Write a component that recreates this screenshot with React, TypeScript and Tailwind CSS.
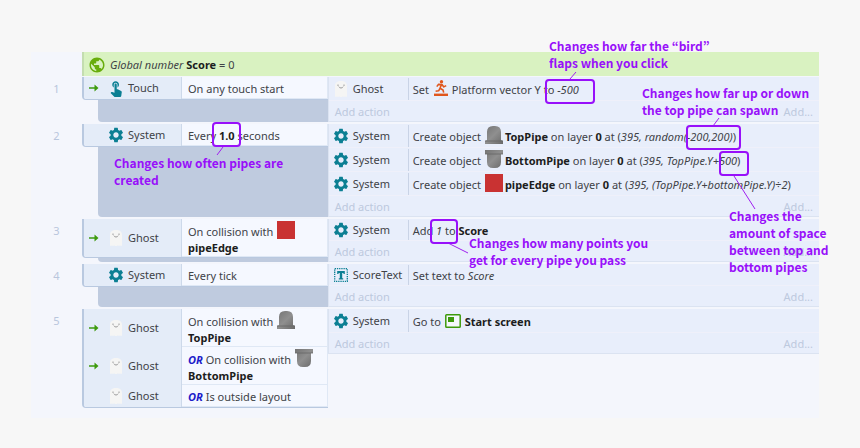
import type { ReactNode } from 'react'
import { MdPublic, MdSettings, MdTouchApp } from 'react-icons/md'

type ObjectName = 'Touch' | 'System' | 'Ghost' | 'ScoreText'
type Condition = { object: ObjectName; trigger?: boolean; text: ReactNode }
type Action = { object: ObjectName; tall?: boolean; text: ReactNode }
type EventBlock = { id: number; conditions: Condition[]; actions: Action[] }

function GhostIcon() {
  return (
    <svg viewBox="0 0 14 18" className="h-[18px] w-3.5" aria-hidden="true">
      <path
        d="M1 6C1 2.8 3.2 1 7 1s6 1.8 6 5v10.2c0 .9-1.6 1.1-2 0-.4 1.100-1.700 1.100-2 0-.4 1.100-3.600 1.100-4 0-.4 1.100-1.600 1.100-2 0-.4 1.100-2 .9-2 0z"
        fill="#f5f5f4"
      />
      <path d="M4 4.500v1.500M10 4.500v1.500M4.800 6.600c.8 1.900 3.600 1.900 4.400 0" fill="none" stroke="#9c9c9c" strokeWidth="1" />
    </svg>
  )
}

function TextIcon() {
  return (
    <svg viewBox="0 0 14 14" className="h-3.5 w-3.5" aria-hidden="true">
      <rect x="0.700" y="0.700" width="12.600" height="12.600" fill="none" stroke="#0b7f93" strokeWidth="1.300" strokeDasharray="1.300 0.900" />
      <path d="M3.200 3h7.600v3H9.600l-.3-1H8.200v5.300h1v1.200H4.800v-1.200h1V5H4.700l-.3 1H3.200z" fill="#0b7f93" />
    </svg>
  )
}

function ObjectIcon({ name }: { name: ObjectName }) {
  if (name === 'Ghost') return <GhostIcon />
  if (name === 'ScoreText') return <TextIcon />
  if (name === 'Touch') return <MdTouchApp className="h-[18px] w-[18px] text-[#0b7f93]" />
  return <MdSettings className="h-[18px] w-[18px] text-[#0b7f93]" />
}

function PipeIcon({ flipped = false }: { flipped?: boolean }) {
  return (
    <svg viewBox="0 0 18 18" className="mr-0.5 ml-px inline-block h-[18px] w-[18px] align-[-3px]" aria-hidden="true">
      <defs>
        <linearGradient id="pipe" x1="0" y1="0" x2="1" y2="1">
          <stop offset="0" stopColor="#747474" />
          <stop offset="0.5" stopColor="#8f8f8f" />
          <stop offset="1" stopColor="#696969" />
        </linearGradient>
      </defs>
      <path
        d={
          flipped
            ? 'M0 0h18v4h-2v8q0 6-6 6H8q-6 0-6-6V4H0z'
            : 'M0 18h18v-3l-2-1V6q0-6-6-6H8Q2 0 2 6v8l-2 1z'
        }
        fill="url(#pipe)"
      />
      <path d={flipped ? 'M0 4h18' : 'M0 15h18'} stroke="#666" strokeWidth="0.800" />
    </svg>
  )
}

function EdgeIcon() {
  return <span className="mr-0.5 ml-px inline-block h-[18px] w-[18px] bg-[#c93232] align-[-3px]" />
}

function PlatformIcon() {
  return (
    <svg viewBox="0 0 14 16" className="mr-1 ml-0.5 inline-block h-4 w-3.5 align-[-2px]" aria-hidden="true">
      <circle cx="7.500" cy="1.800" r="1.700" fill="#e0561d" />
      <path
        d="M2.800 6.600L4.400 4.400 8 4.600l1.800 2.300 2.400-1.300M7.400 4.800L6 8.300l3 1.700.7 2.600M6 8.300l-1.400 2.500-3 .4"
        fill="none"
        stroke="#e0561d"
        strokeWidth="1.600"
        strokeLinejoin="round"
      />
      <path d="M0 13.600h14V16H0z" fill="#e0561d" />
    </svg>
  )
}

function LayoutIcon() {
  return (
    <svg viewBox="0 0 16 14" className="mr-1 ml-px inline-block h-3.5 w-4 align-[-2px]" aria-hidden="true">
      <rect x="0.800" y="0.800" width="14.400" height="12.400" rx="0.800" fill="#f5f8fd" stroke="#3d9a0c" strokeWidth="1.500" />
      <rect x="3" y="3" width="6" height="5" fill="#3d9a0c" />
    </svg>
  )
}

function TriggerArrow() {
  return (
    <svg viewBox="0 0 10 8" className="h-2 w-2.5" aria-hidden="true">
      <path d="M0 3.200h5.500V.5L9.500 4l-4 3.500V4.800H0z" fill="#3d9a0c" />
    </svg>
  )
}

const Or = () => <strong className="font-bold text-[#1c1cc9] italic">OR</strong>

const EVENTS: EventBlock[] = [
  {
    id: 1,
    conditions: [{ object: 'Touch', trigger: true, text: 'On any touch start' }],
    actions: [
      {
        object: 'Ghost',
        tall: true,
        text: <>Set <PlatformIcon />Platform vector Y to <i>-500</i></>,
      },
    ],
  },
  {
    id: 2,
    conditions: [{ object: 'System', text: <>Every <b>1.0</b> seconds</> }],
    actions: [
      {
        object: 'System',
        tall: true,
        text: <>Create object <PipeIcon /><b>TopPipe</b> on layer <b>0</b> at (<i>395, random(-200,200)</i>)</>,
      },
      {
        object: 'System',
        tall: true,
        text: <>Create object <PipeIcon flipped /><b>BottomPipe</b> on layer <b>0</b> at (<i>395, TopPipe.Y+500</i>)</>,
      },
      {
        object: 'System',
        tall: true,
        text: <>Create object <EdgeIcon /><b>pipeEdge</b> on layer <b>0</b> at (<i>395, (TopPipe.Y+bottomPipe.Y)÷2</i>)</>,
      },
    ],
  },
  {
    id: 3,
    conditions: [
      { object: 'Ghost', trigger: true, text: <>On collision with <EdgeIcon /> <b>pipeEdge</b></> },
    ],
    actions: [{ object: 'System', text: <>Add <i>1</i> to <b>Score</b></> }],
  },
  {
    id: 4,
    conditions: [{ object: 'System', text: 'Every tick' }],
    actions: [{ object: 'ScoreText', text: <>Set text to <i>Score</i></> }],
  },
  {
    id: 5,
    conditions: [
      { object: 'Ghost', trigger: true, text: <>On collision with <PipeIcon /> <b>TopPipe</b></> },
      { object: 'Ghost', trigger: true, text: <><Or /> On collision with <PipeIcon flipped /> <b>BottomPipe</b></> },
      { object: 'Ghost', text: <><Or /> Is outside layout</> },
    ],
    actions: [{ object: 'System', tall: true, text: <>Go to <LayoutIcon /><b>Start screen</b></> }],
  },
]

function ConditionRow({ condition }: { condition: Condition }) {
  return (
    <div className="flex min-h-[22px]">
      <div className="flex w-[98px] shrink-0 items-center border-r border-[#cdd9ea] bg-[#e4ecf8]">
        <span className="flex w-5 shrink-0 justify-center">{condition.trigger && <TriggerArrow />}</span>
        <span className="flex w-6 shrink-0 justify-center">
          <ObjectIcon name={condition.object} />
        </span>
        {condition.object}
      </div>
      <div className="flex flex-1 items-center border-r border-b border-[#dfe8f5] bg-[#f5f8ff] pl-1.5">
        <p className="max-w-[132px] pt-0.5 leading-4">{condition.text}</p>
      </div>
    </div>
  )
}

function ActionRow({ action }: { action: Action }) {
  return (
    <div
      className={`flex items-stretch border-b border-[#eff0fa] pt-px whitespace-nowrap ${action.tall ? 'h-6' : 'h-[22px]'}`}
    >
      <div className="flex w-20 shrink-0 items-center border-r border-[#c9d3e6]">
        <span className="flex w-6 shrink-0 justify-center">
          <ObjectIcon name={action.object} />
        </span>
        {action.object}
      </div>
      <div className="flex items-center pt-px pl-1">
        <p className="leading-5">{action.text}</p>
      </div>
    </div>
  )
}

function EventRow({ event }: { event: EventBlock }) {
  return (
    <section className="flex">
      <span className="w-[51px] shrink-0 pt-1 text-center text-[#b9c6dd]">{event.id}</span>
      <div className="flex flex-1 items-stretch">
        <div className="flex w-1/3 shrink-0 flex-col">
          <div className="overflow-hidden rounded-bl-sm border-b border-l-2 border-[#b9c9e0]">
            {event.conditions.map((c, i) => (
              <ConditionRow key={i} condition={c} />
            ))}
          </div>
          <div className="ml-4 flex-1 rounded-bl-sm bg-[#bfcbdf]" />
        </div>
        <div className="flex-1 self-start border-b border-l border-[#dbe3f1] bg-[#e8eefb]">
          {event.actions.map((a, i) => (
            <ActionRow key={i} action={a} />
          ))}
          <div className="flex h-5 items-center justify-between px-1.5 pt-px text-[#bdc9de]">
            <button type="button">Add action</button>
            <button type="button">Add...</button>
          </div>
        </div>
      </div>
    </section>
  )
}

// Highlight frames drawn over the edited values
const FRAMES = [
  'left-[545px] top-[79px] w-[50px] h-[25px]',
  'left-[212px] top-[122px] w-[29px] h-[25px]',
  'left-[686px] top-[125px] w-[55px] h-[25px]',
  'left-[719px] top-[151px] w-[30px] h-[25px]',
  'left-[430px] top-[219px] w-[28px] h-[25px]',
]

const NOTES = [
  { place: 'left-[549px] top-[37px]', lines: ['Changes how far the “bird”', 'flaps when you click'] },
  { place: 'left-[642px] top-[84px]', lines: ['Changes how far up or down', 'the top pipe can spawn'] },
  { place: 'left-[114px] top-[154px]', lines: ['Changes how often pipes are', 'created'] },
  { place: 'left-[469px] top-[234px]', lines: ['Changes how many points you', 'get for every pipe you pass'] },
  { place: 'left-[729px] top-[207px]', lines: ['Changes the', 'amount of space', 'between top and', 'bottom pipes'] },
]

function Annotations() {
  return (
    <div className="pointer-events-none absolute inset-0">
      <svg className="absolute inset-0 h-full w-full" stroke="#a020f0" strokeWidth="1" aria-hidden="true">
        <path d="M576 72l-6 7M719 118l-6 8M223 147l-6 8M734 176l21 33M448 243l20 10" fill="none" />
      </svg>
      {FRAMES.map((frame) => (
        <span key={frame} className={`absolute rounded border-2 border-[#9810fa] ${frame}`} />
      ))}
      {NOTES.map((note) => (
        <p
          key={note.place}
          className={`absolute font-['Noto_Sans_CJK_KR',sans-serif] text-xs leading-[17px] font-bold whitespace-nowrap text-[#9810fa] ${note.place}`}
        >
          {note.lines.map((line) => (
            <span key={line} className="block">
              {line}
            </span>
          ))}
        </p>
      ))}
    </div>
  )
}

export default function App() {
  return (
    <main className="relative min-h-screen bg-[#f7f7f7] pt-[52px] pr-[41px] pb-7 pl-[31px] font-['Noto_Sans',sans-serif] text-[11px] leading-4 text-[#404247] [&_b]:text-[#1c1d20]">
      <div className="bg-[#f4f6fc] pb-2.5">
        <header className="ml-[51px] flex h-6 items-center gap-1 border-l-2 border-[#c4ddb0] bg-[#d9f2c1] pt-px pl-1">
          <MdPublic className="h-[18px] w-[18px] text-[#68ad0c]" />
          <p>
            <i>Global number</i> <b>Score</b> = 0
          </p>
        </header>
        <div className="flex flex-col gap-0.5 pt-px">
          {EVENTS.map((event) => (
            <EventRow key={event.id} event={event} />
          ))}
        </div>
      </div>
      <Annotations />
    </main>
  )
}
